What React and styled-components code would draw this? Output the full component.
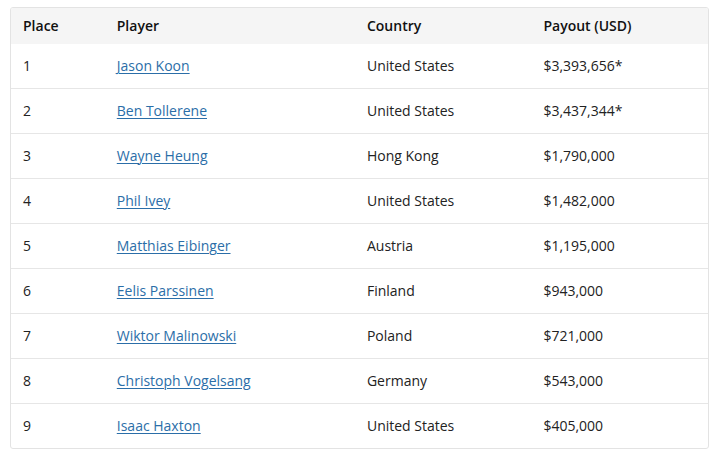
import React from "react";
import styled, { createGlobalStyle } from "styled-components";

const Global = createGlobalStyle`
  html, body { margin: 0; padding: 0; background: #fff; }
  body { font-family: "Open Sans", "Liberation Sans", sans-serif; }
`;

const Page = styled.div`
  padding: 7px 11px 0 10px;
`;

const Table = styled.table`
  width: 699px;
  border-collapse: separate;
  border-spacing: 0;
  border: 1px solid #e3e3e3;
  border-radius: 3px;
  overflow: hidden;
  font-size: 14px;
  color: #222;
`;

const HeadCell = styled.th`
  background: #f5f5f5;
  text-align: left;
  font-weight: 600;
  color: #111;
  height: 36px;
  padding: 0 0 2px 12px;
  width: ${(p) => p.$w}px;
  box-sizing: border-box;
`;

const Cell = styled.td`
  height: ${(p) => (p.$first ? 44 : 45)}px;
  box-sizing: border-box;
  padding: 0 0 2px 12px;
  border-top: ${(p) => (p.$first ? "none" : "1px solid #e6e6e6")};
  vertical-align: middle;
`;

const PlayerLink = styled.a`
  color: #2b6ea8;
  text-decoration: underline;
  text-underline-offset: 2px;
  text-decoration-thickness: 1px;
`;

const rows = [
  ["1", "Jason Koon", "United States", "$3,393,656*"],
  ["2", "Ben Tollerene", "United States", "$3,437,344*"],
  ["3", "Wayne Heung", "Hong Kong", "$1,790,000"],
  ["4", "Phil Ivey", "United States", "$1,482,000"],
  ["5", "Matthias Eibinger", "Austria", "$1,195,000"],
  ["6", "Eelis Parssinen", "Finland", "$943,000"],
  ["7", "Wiktor Malinowski", "Poland", "$721,000"],
  ["8", "Christoph Vogelsang", "Germany", "$543,000"],
  ["9", "Isaac Haxton", "United States", "$405,000"],
];

export default function App() {
  return (
    <Page>
      <Global />
      <Table>
        <thead>
          <tr>
            <HeadCell $w={94}>Place</HeadCell>
            <HeadCell $w={251}>Player</HeadCell>
            <HeadCell $w={177}>Country</HeadCell>
            <HeadCell $w={177}>Payout (USD)</HeadCell>
          </tr>
        </thead>
        <tbody>
          {rows.map((r, i) => (
            <tr key={r[0]}>
              <Cell $first={i === 0}>{r[0]}</Cell>
              <Cell $first={i === 0}>
                <PlayerLink href="#">{r[1]}</PlayerLink>
              </Cell>
              <Cell $first={i === 0}>{r[2]}</Cell>
              <Cell $first={i === 0}>{r[3]}</Cell>
            </tr>
          ))}
        </tbody>
      </Table>
    </Page>
  );
}
